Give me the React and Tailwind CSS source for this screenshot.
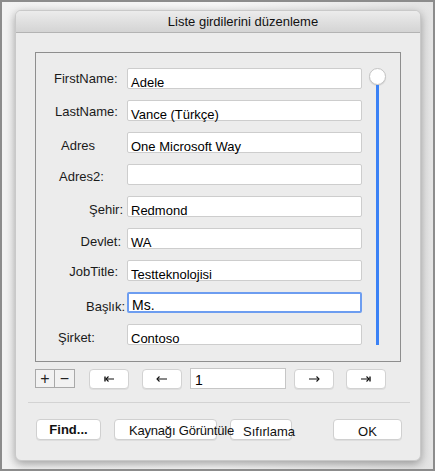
const ROWS = [
  { label: "FirstName:", value: "Adele", lab: "justify-start pl-[17px] pt-[3px]" },
  { label: "LastName:", value: "Vance (Türkçe)", lab: "justify-start pl-[18px] pt-[4px]" },
  { label: "Adres", value: "One Microsoft Way", lab: "justify-start pl-[24px] pt-[6px]" },
  { label: "Adres2:", value: "", lab: "justify-start pl-[22px] pt-[5px]" },
  { label: "Şehir:", value: "Redmond", lab: "justify-end pr-[4px] pt-[6px]" },
  { label: "Devlet:", value: "WA", lab: "justify-end pr-[6px] pt-[6px]", thin: true },
  { label: "JobTitle:", value: "Testteknolojisi", lab: "justify-end pr-[9px] pt-[4px]" },
  { label: "Başlık:", value: "Ms.", lab: "justify-end pr-[2px] pt-[7px]", focus: true },
  { label: "Şirket:", value: "Contoso", lab: "justify-start pl-[21px] pt-[6px]" },
];

function Arrow({ dir, bar }) {
  const flip = dir === "right" ? "scale(-1,1) translate(-14,0)" : undefined;
  return (
    <svg width="14" height="8" viewBox="0 0 14 8" fill="none" stroke="#111" strokeWidth="1.1">
      <g transform={flip}>
        {bar && <line x1="3" y1="1.5" x2="3" y2="6.5" strokeWidth="1.4" />}
        <line x1={bar ? 4 : 2} y1="4" x2="12" y2="4" />
        <polyline points={bar ? "6.5,1.5 4,4 6.5,6.5" : "4.5,1.5 2,4 4.5,6.5"} />
      </g>
    </svg>
  );
}

function NavBtn({ children, className = "" }) {
  return (
    <div
      className={`flex h-[20px] w-[40px] items-center justify-center rounded-[4px] border border-[#d2d2d2] bg-white shadow-[0_1px_0_rgba(0,0,0,0.06)] ${className}`}
    >
      {children}
    </div>
  );
}

function Btn({ children, className = "" }) {
  return (
    <div
      className={`flex h-[21px] items-center rounded-[4px] border border-[#d0d0d0] bg-white text-[13px] leading-none text-[#111] shadow-[0_1px_0_rgba(0,0,0,0.06)] ${className}`}
    >
      {children}
    </div>
  );
}

export default function App() {
  return (
    <div className="h-[471px] w-[435px] overflow-hidden border-2 border-[#8c8c8c] bg-gradient-to-r from-[#f2f2f2] via-[#f7f7f7] to-[#e4e4e4] pl-[13px] pt-[8px] font-['Liberation_Sans',Arial,sans-serif]">
      <div className="flex h-[451px] w-[406px] flex-col overflow-hidden rounded-[6px] border border-[#c9c9c9] bg-[#ececec] shadow-[0_3px_10px_rgba(0,0,0,0.35)]">
        {/* title bar */}
        <div className="flex h-[22px] shrink-0 items-center justify-center border-b border-[#b3b3b3] bg-gradient-to-b from-[#ececec] to-[#d4d4d4] text-[13px] text-[#111]">
          <span className="pl-[50px] pt-[1px]">Liste girdilerini düzenleme</span>
        </div>

        {/* records box */}
        <div className="ml-[19px] mt-[19px] flex h-[310px] w-[366px] border border-[#8e8e8e] pl-[1px] pt-[15px] pb-[16px]">
          <div className="flex flex-col gap-[11px]">
            {ROWS.map((r) => (
              <div key={r.label} className="flex h-[21px] items-start">
                <div className={`flex w-[90px] text-[13px] leading-[16px] text-[#1a1a1a] ${r.lab}`}>
                  {r.label}
                </div>
                <div
                  className={`h-[21px] w-[235px] rounded-[2px] bg-white pl-[3px] leading-[16px] text-black ${
                    r.focus
                      ? "border-2 border-[#6d9df0] pl-[2px] pt-[3px] text-[14px]"
                      : "border border-[#cdcdcd] pt-[6px] text-[13px]"
                  } ${r.thin ? "text-[#333]" : ""}`}
                >
                  {r.value}
                </div>
              </div>
            ))}
          </div>
          <div className="ml-[7px] flex w-[17px] flex-col items-center">
            <div className="h-[17px] w-[17px] shrink-0 rounded-full border border-[#c4c4c4] bg-white shadow-[0_1px_1px_rgba(0,0,0,0.1)]" />
            <div className="w-[3px] flex-1 bg-[#3b82f6]" />
          </div>
        </div>

        {/* navigation row */}
        <div className="mt-[6px] flex items-center pl-[19px]">
          <div className="mr-[14px] flex h-[19px] border border-[#a9a9a9] bg-[#f2f2f2] text-[16px] leading-none text-[#222]">
            <div className="flex w-[19px] items-center justify-center border-r border-[#a9a9a9]">+</div>
            <div className="flex w-[19px] items-center justify-center">−</div>
          </div>
          <NavBtn>
            <Arrow dir="left" bar />
          </NavBtn>
          <NavBtn className="ml-[13px]">
            <Arrow dir="left" />
          </NavBtn>
          <div className="ml-[8px] h-[21px] w-[96px] border border-[#c6c6c6] bg-white pl-[4px] pt-[3px] text-[14px] leading-[16px] text-black">
            1
          </div>
          <NavBtn className="ml-[8px]">
            <Arrow dir="right" />
          </NavBtn>
          <NavBtn className="ml-[12px]">
            <Arrow dir="right" bar />
          </NavBtn>
        </div>

        <div className="ml-[12px] mt-[13px] h-px w-[382px] bg-[#d3d3d3]" />

        {/* action buttons */}
        <div className="mt-[16px] flex items-center pl-[20px]">
          <Btn className="w-[65px] justify-center font-bold">Find...</Btn>
          <Btn className="relative z-10 ml-[13px] w-[103px] whitespace-nowrap pl-[14px] pt-[2px] text-[12px] tracking-[-0.2px]">
            Kaynağı Görüntüle
          </Btn>
          <Btn className="ml-[13px] w-[62px] pl-[12px] pt-[3px]">Sıfırlama</Btn>
          <Btn className="ml-[41px] w-[69px] justify-center pt-[3px]">OK</Btn>
        </div>
      </div>
    </div>
  );
}
